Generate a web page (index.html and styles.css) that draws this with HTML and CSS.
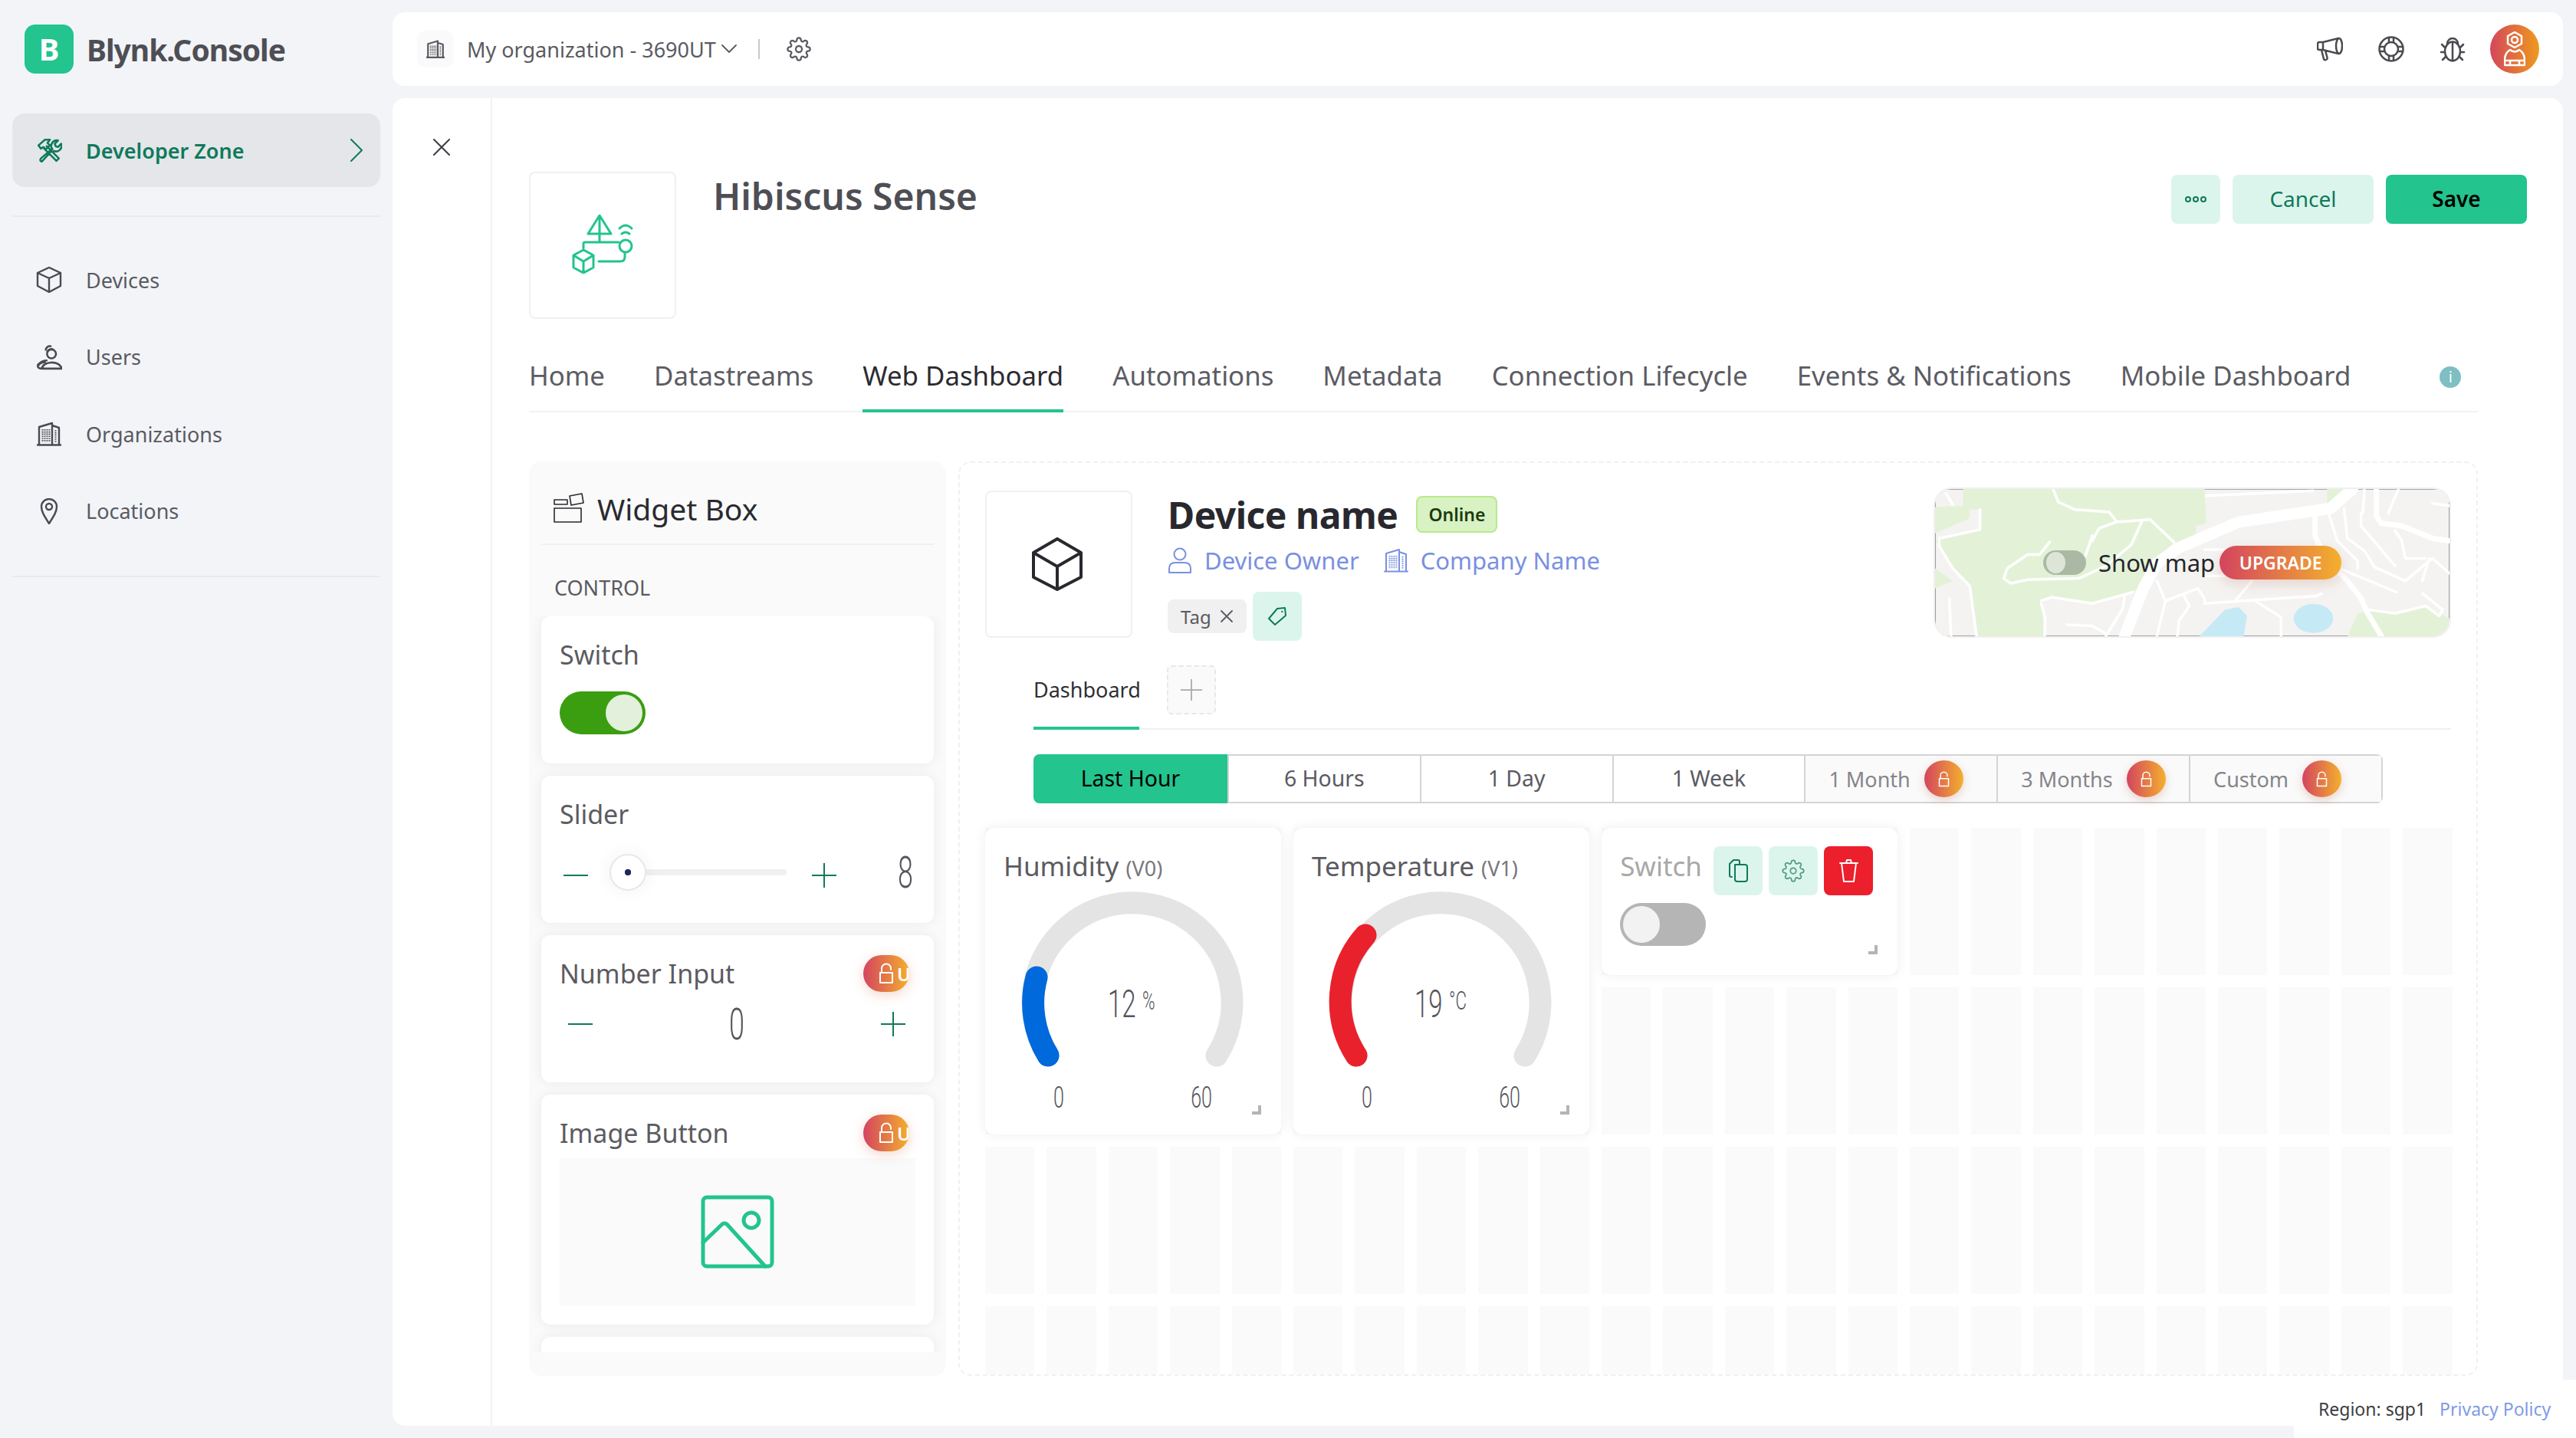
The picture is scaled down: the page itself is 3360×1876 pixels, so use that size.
FILE: index.html
```html
<!DOCTYPE html>
<html>
<head>
    <title>Blynk.Console</title>
    <link rel="stylesheet" href="styles.css">
</head>
<body>
    <svg class="sprite">
        <symbol id="gear" viewBox="0 0 24 24"><circle cx="12" cy="12" r="3"/><path d="M19.4 15a1.65 1.65 0 0 0 .33 1.82l.06.06a2 2 0 0 1 0 2.83 2 2 0 0 1-2.83 0l-.06-.06a1.65 1.65 0 0 0-1.82-.33 1.65 1.65 0 0 0-1 1.51V21a2 2 0 0 1-2 2 2 2 0 0 1-2-2v-.09A1.65 1.65 0 0 0 9 19.4a1.65 1.65 0 0 0-1.82.33l-.06.06a2 2 0 0 1-2.83 0 2 2 0 0 1 0-2.83l.06-.06a1.65 1.65 0 0 0 .33-1.82 1.65 1.65 0 0 0-1.51-1H3a2 2 0 0 1-2-2 2 2 0 0 1 2-2h.09A1.65 1.65 0 0 0 4.6 9a1.65 1.65 0 0 0-.33-1.82l-.06-.06a2 2 0 0 1 0-2.83 2 2 0 0 1 2.83 0l.06.06a1.65 1.65 0 0 0 1.82.33H9a1.65 1.65 0 0 0 1-1.51V3a2 2 0 0 1 2-2 2 2 0 0 1 2 2v.09a1.65 1.65 0 0 0 1 1.51 1.65 1.65 0 0 0 1.82-.33l.06-.06a2 2 0 0 1 2.83 0 2 2 0 0 1 0 2.83l-.06.06a1.65 1.65 0 0 0-.33 1.82V9a1.65 1.65 0 0 0 1.51 1H21a2 2 0 0 1 2 2 2 2 0 0 1-2 2h-.09a1.65 1.65 0 0 0-1.51 1z"/></symbol>
        <symbol id="building" viewBox="0 0 32 34"><path d="M3 31V8L20 3V31M20 6L29 9V31M1 31.5H31"/><path class="dots" d="M7.5 11V28M10.5 11V28M13.5 11V28M16.5 11V28M24.5 12V28"/></symbol>
        <symbol id="lock" viewBox="0 0 20 28"><path d="M2 13H18V26H2ZM4 13V7.5A6 6 0 0 1 16 7.5V9"/></symbol>
        <symbol id="plus" viewBox="0 0 32 32"><path d="M0 16H32M16 0V32"/></symbol>
        <symbol id="minus" viewBox="0 0 32 32"><path d="M0 16H32"/></symbol>
    </svg>

    <aside class="sidebar">
        <div class="brand">
            <div class="brand-logo">B</div>
            <div class="brand-name">Blynk.Console</div>
        </div>
        <div class="nav-active">
            <svg class="nav-icon tools" viewBox="0 0 32 30"><path d="M13 10L28 25L25 28L10 13M3 9L11 2H17L14 6L17 9L12 14L9 11L6 13ZM20 13L6 25Q4 28 7 29L18 17M20 14A7 7 0 0 1 27 3L23 7L24 10L27 11L31 7A7 7 0 0 1 22 16"/></svg>
            <span class="nav-active-label">Developer Zone</span>
            <svg class="nav-chevron" viewBox="0 0 16 30"><path d="M1 1L15 15L1 29"/></svg>
        </div>
        <div class="nav-list">
            <div class="nav-item">
                <svg class="nav-icon" viewBox="0 0 32 34"><path d="M16 1L31 8V25L16 33L1 25V8ZM1 8L16 15L31 8M16 15V33"/></svg>
                <span>Devices</span>
            </div>
            <div class="nav-item">
                <svg class="nav-icon" viewBox="0 0 32 32"><circle cx="19" cy="12" r="5.5"/><path d="M14 9A5 5 0 0 1 21 6.5M12 7A5 5 0 0 1 18 2.5M7 30C9 21 27 19 32 30ZM7 30C2 30 0 26 5 23C7 21 10 20 13 20M3 26C5 23 8 22 11 22"/></svg>
                <span>Users</span>
            </div>
            <div class="nav-item">
                <svg class="nav-icon"><use href="#building"/></svg>
                <span>Organizations</span>
            </div>
            <div class="nav-item">
                <svg class="nav-icon" viewBox="0 0 32 34"><path d="M16 33C9 22 6 17 6 11A10 10 0 0 1 26 11C26 17 23 22 16 33Z"/><circle cx="16" cy="11" r="4"/></svg>
                <span>Locations</span>
            </div>
        </div>
    </aside>

    <div class="page">
        <header class="topbar">
            <div class="org-badge"><svg class="org-icon"><use href="#building"/></svg></div>
            <span class="org-name">My organization - 3690UT</span>
            <svg class="org-chevron" viewBox="0 0 20 12"><path d="M1 1L10 10L19 1"/></svg>
            <span class="org-sep"></span>
            <svg class="org-gear"><use href="#gear"/></svg>
            <div class="topbar-icons">
                <svg class="top-icon" viewBox="0 0 34 30"><path d="M28 1L8 6H3Q1 6 1 8V14Q1 16 3 16H8L28 21M8 6V16M6 16L9 28Q10 30 12 29Q14 28 13.5 26L11 17"/><ellipse cx="29" cy="11" rx="4" ry="10"/></svg>
                <svg class="top-icon" viewBox="0 0 34 34"><circle cx="17" cy="17" r="15.5"/><circle cx="17" cy="17" r="9"/><path d="M14 2V8M20 2V8M14 26V32M20 26V32M2 14H8M2 20H8M26 14H32M26 20H32"/></svg>
                <svg class="top-icon" viewBox="0 0 30 34"><ellipse cx="15" cy="20" rx="10" ry="12.5"/><path d="M15 8V32M8 10A7 7 0 0 1 22 10M5 15L1 11M25 15L29 11M4 21H0M26 21H30M6 27L2 31M24 27L28 31"/></svg>
                <div class="avatar">
                    <svg class="avatar-icon" viewBox="0 0 28 46"><path d="M14 1L23 6V16L14 21L5 16V6Z"/><circle cx="14" cy="11" r="4"/><path d="M8 24Q14 29 20 24Q27 28 27 38V44H1V38Q1 28 8 24ZM1 38H27M8 38V44M20 38V44"/></svg>
                </div>
            </div>
        </header>

        <main class="panel">
            <div class="close-col">
                <svg class="close-icon" viewBox="0 0 22 22"><path d="M1 1L21 21M21 1L1 21"/></svg>
            </div>
            <div class="content">
                <div class="product-head">
                    <div class="product-box">
                        <svg class="product-icon" viewBox="0 0 81 77"><path d="M36 1L51 25H21ZM36 1V25M36 25V36M15 44V38Q15 36 17 36H61"/><circle cx="70" cy="41" r="8"/><path d="M62 18Q70 10 78 18M65 25Q70 21 75 25"/><path d="M15 46L28 53V69L15 76L2 69V53ZM2 53L15 61L28 53M15 61V76M35 61H63Q69 61 69 55V50"/></svg>
                    </div>
                    <h1 class="product-title">Hibiscus Sense</h1>
                    <div class="product-actions">
                        <button class="btn btn-soft btn-more">
                            <svg class="more-icon" viewBox="0 0 28 8"><circle cx="4" cy="4" r="3"/><circle cx="14" cy="4" r="3"/><circle cx="24" cy="4" r="3"/></svg>
                        </button>
                        <button class="btn btn-soft btn-wide">Cancel</button>
                        <button class="btn btn-save btn-wide">Save</button>
                    </div>
                </div>

                <nav class="tabs">
                    <span class="tab">Home</span>
                    <span class="tab">Datastreams</span>
                    <span class="tab tab-active">Web Dashboard</span>
                    <span class="tab">Automations</span>
                    <span class="tab">Metadata</span>
                    <span class="tab">Connection Lifecycle</span>
                    <span class="tab">Events &amp; Notifications</span>
                    <span class="tab">Mobile Dashboard</span>
                    <span class="tab-info">i</span>
                </nav>

                <div class="workspace">
                    <section class="widget-box">
                        <div class="box-head">
                            <svg class="box-icon" viewBox="0 0 40 40"><path d="M1 20H36V38H1ZM1 9H18V15H1ZM21 4L37 1L39 13L23 16Z"/></svg>
                            <span>Widget Box</span>
                        </div>
                        <div class="box-group">CONTROL</div>
                        <div class="box-list">
                            <div class="box-card">
                                <div class="card-title">Switch</div>
                                <div class="toggle toggle-on"><span class="knob"></span></div>
                            </div>
                            <div class="box-card">
                                <div class="card-title">Slider</div>
                                <div class="slider-row">
                                    <svg class="step"><use href="#minus"/></svg>
                                    <div class="slider-track"><span class="slider-thumb"></span></div>
                                    <svg class="step"><use href="#plus"/></svg>
                                    <span class="thin slider-value">8</span>
                                </div>
                            </div>
                            <div class="box-card">
                                <div class="card-title">Number Input</div>
                                <div class="upgrade-pill"><svg class="pill-lock"><use href="#lock"/></svg><span>U</span></div>
                                <div class="number-row">
                                    <svg class="step"><use href="#minus"/></svg>
                                    <span class="thin number-value">0</span>
                                    <svg class="step"><use href="#plus"/></svg>
                                </div>
                            </div>
                            <div class="box-card box-card-tall">
                                <div class="card-title">Image Button</div>
                                <div class="upgrade-pill"><svg class="pill-lock"><use href="#lock"/></svg><span>U</span></div>
                                <div class="image-slot">
                                    <svg class="image-icon" viewBox="0 0 96 96"><rect x="3" y="3" width="90" height="90" rx="5"/><ellipse cx="66" cy="33" rx="10" ry="10"/><path d="M3 62L28 38Q31 36 34 38L84 93"/></svg>
                                </div>
                            </div>
                            <div class="box-card"></div>
                        </div>
                    </section>

                    <section class="device-panel">
                        <div class="device-head">
                            <div class="device-box">
                                <svg class="device-icon" viewBox="0 0 66 70"><path d="M33 2L64 20V52L33 68L2 52V20ZM2 20L33 38L64 20M33 38V68"/></svg>
                            </div>
                            <div class="device-info">
                                <div class="device-title">
                                    <span class="device-name">Device name</span>
                                    <span class="status">Online</span>
                                </div>
                                <div class="device-links">
                                    <svg class="link-icon" viewBox="0 0 32 34"><circle cx="16" cy="9" r="7.5"/><path d="M2 33V28Q2 20 10 20H22Q30 20 30 28V33Z"/></svg>
                                    <span>Device Owner</span>
                                    <svg class="link-icon link-building"><use href="#building"/></svg>
                                    <span>Company Name</span>
                                </div>
                                <div class="device-tags">
                                    <span class="tag">Tag <svg class="tag-x" viewBox="0 0 16 16"><path d="M1 1L15 15M15 1L1 15"/></svg></span>
                                    <span class="tag-add"><svg class="tag-icon" viewBox="0 0 26 26"><path d="M13 3L23 2L24 12L10 24L2 16ZM19 7H19.5"/></svg></span>
                                </div>
                            </div>
                            <div class="map-card">
                                <svg class="map-art" viewBox="28 33 1512 588" preserveAspectRatio="none">
                                    <rect x="28" y="33" width="1512" height="588" fill="#f4f3f1"/>
                                    <path class="map-green" d="M110 33H820L825 170L795 180V225L720 270L640 400L610 450L490 490L370 465L340 490L350 621H150L130 420L80 350L30 240L40 230L160 195V115H130V150L28 210V105L110 100ZM1240 621L1270 530L1310 515L1390 530L1470 500L1540 550V621ZM1180 33H1240L1190 100H1180ZM28 350L80 400L28 430Z"/>
                                    <path class="map-water" d="M805 621L880 515L920 505L945 540L935 621Z"/>
                                    <circle class="map-water" cx="1140" cy="550" r="58"/>
                                    <g class="map-roads">
                                        <path class="road-wide" d="M585 621L640 430L680 330L740 270L920 165L1190 110L1255 33"/>
                                        <path class="road-mid" d="M1145 130V220L1170 300L1240 400L1280 470L1300 530L1340 621M1325 33V140L1340 170L1400 180L1490 230L1540 240"/>
                                        <path d="M375 33L390 85L440 115L540 125L560 160M490 240L510 190L560 165L660 155L730 245M635 165L605 255L530 340L450 390L300 395L250 410L230 390L240 350L300 295L335 295L365 245M490 220L470 300M160 115V195L40 230V260L80 350L130 420L150 621M70 470L75 621M340 480L370 465L490 490L610 445M340 490L352 550L350 621M585 460L580 510L530 621M415 575L490 580L530 610M680 400L705 480L680 621M705 480L800 430L820 470V490L1150 460L1165 450M760 460L775 500L745 560L740 621M960 400L910 480M970 480L1045 545V621M825 60L1140 40M1185 130L1210 240L1270 320V350M1230 110L1240 230L1290 280L1320 345L1410 400L1490 310L1540 370M1280 130V180L1380 340M1225 355L1385 445M1290 33L1285 130M1390 33L1360 130M1380 200L1400 240L1410 310L1470 310M1460 400L1480 310M1300 515L1380 530L1470 500L1510 540L1520 515L1460 450M820 275H880M820 380H880M1490 90L1540 100M60 50L80 95"/>
                                    </g>
                                </svg>
                                <div class="map-overlay">
                                    <span class="map-toggle"><span class="map-knob"></span></span>
                                    <span class="map-label">Show map</span>
                                    <span class="map-upgrade">UPGRADE</span>
                                </div>
                            </div>
                        </div>

                        <div class="dash-tabs">
                            <span class="dash-tab">Dashboard</span>
                            <span class="dash-add"><svg class="dash-plus"><use href="#plus"/></svg></span>
                        </div>

                        <div class="ranges">
                            <span class="range range-active">Last Hour</span>
                            <span class="range">6 Hours</span>
                            <span class="range">1 Day</span>
                            <span class="range">1 Week</span>
                            <span class="range range-locked">1 Month <span class="lock-dot"><svg class="dot-lock"><use href="#lock"/></svg></span></span>
                            <span class="range range-locked">3 Months <span class="lock-dot"><svg class="dot-lock"><use href="#lock"/></svg></span></span>
                            <span class="range range-locked">Custom <span class="lock-dot"><svg class="dot-lock"><use href="#lock"/></svg></span></span>
                        </div>

                        <div class="grid">
                            <div class="widget widget-gauge">
                                <div class="widget-title">Humidity <small>(V0)</small></div>
                                <svg class="gauge" viewBox="0 0 386 400">
                                    <path class="gauge-track" d="M82 297A130 130 0 1 1 302 297"/>
                                    <path class="gauge-blue" d="M82 297A130 130 0 0 1 67 195"/>
                                    <text class="gauge-value" transform="translate(160 247) scale(.66 1)">12</text>
                                    <text class="gauge-unit" transform="translate(205 237) scale(.66 1)">%</text>
                                    <text class="gauge-limit" transform="translate(96 365) scale(.66 1)" text-anchor="middle">0</text>
                                    <text class="gauge-limit" transform="translate(282 365) scale(.66 1)" text-anchor="middle">60</text>
                                </svg>
                                <span class="corner"></span>
                            </div>
                            <div class="widget widget-gauge">
                                <div class="widget-title">Temperature <small>(V1)</small></div>
                                <svg class="gauge" viewBox="0 0 386 400">
                                    <path class="gauge-track" d="M82 297A130 130 0 1 1 302 297"/>
                                    <path class="gauge-red" d="M82 297A130 130 0 0 1 94 140"/>
                                    <text class="gauge-value" transform="translate(158 247) scale(.66 1)">19</text>
                                    <text class="gauge-unit" transform="translate(203 237) scale(.66 1)">°C</text>
                                    <text class="gauge-limit" transform="translate(96 365) scale(.66 1)" text-anchor="middle">0</text>
                                    <text class="gauge-limit" transform="translate(282 365) scale(.66 1)" text-anchor="middle">60</text>
                                </svg>
                                <span class="corner"></span>
                            </div>
                            <div class="widget widget-switch">
                                <div class="switch-head">
                                    <span class="widget-title widget-title-dim">Switch</span>
                                    <span class="tool"><svg class="tool-icon" viewBox="0 0 25 30"><path d="M8 7H21Q24 7 24 10V26Q24 29 21 29H11Q8 29 8 26ZM4 23H3Q1 23 1 21V6L6 1H12Q14 1 14 3V7"/></svg></span>
                                    <span class="tool"><svg class="tool-icon tool-gear"><use href="#gear"/></svg></span>
                                    <span class="tool tool-danger"><svg class="tool-icon" viewBox="0 0 25 30"><path d="M1 5H24M3 5L6 29H19L22 5M9 5L10 1H15L16 5"/></svg></span>
                                </div>
                                <div class="toggle toggle-off"><span class="knob"></span></div>
                                <span class="corner"></span>
                            </div>
                        </div>
                    </section>
                </div>
            </div>
        </main>
    </div>

    <footer class="legal">
        <span>Region: sgp1</span>
        <span class="legal-link">Privacy Policy</span>
    </footer>
</body>
</html>
```

FILE: styles.css
```css
* {
  box-sizing: border-box;
}
html, body {
  height: 100%;
}
body {
  margin: 0;
  display: flex;
  height: 1876px;
  overflow: hidden;
  position: relative;
  background: #f2f4f8;
  color: #5a5a62;
  font-family: "Noto Sans", sans-serif;
  font-size: 27px;
}
svg {
  display: block;
  flex: none;
  fill: none;
  stroke: currentColor;
  stroke-width: 2.5;
  stroke-linejoin: round;
  stroke-linecap: round;
}
.sprite {
  display: none;
}
.dots {
  stroke-dasharray: 1.6 1.2;
  stroke-linecap: butt;
  stroke-width: 2;
}

/* sidebar */
.sidebar {
  width: 512px;
  flex: none;
  padding: 32px 16px 0;
}
.brand {
  display: flex;
  align-items: center;
  padding-left: 16px;
  height: 64px;
}
.brand-logo {
  width: 64px;
  height: 64px;
  border-radius: 14px;
  background: #23c48e;
  color: #fff;
  font-size: 40px;
  font-weight: 700;
  line-height: 64px;
  text-align: center;
}
.brand-name {
  margin-left: 17px;
  color: #4e4e55;
  font-size: 39px;
  font-weight: 700;
  letter-spacing: -1px;
}
.nav-active {
  display: flex;
  align-items: center;
  height: 96px;
  margin-top: 52px;
  padding: 0 23px 0 31px;
  border-radius: 16px;
  background: #e4e6ea;
  color: #0f7a5a;
  font-weight: 600;
}
.nav-active-label {
  margin-left: 31px;
  flex: 1;
}
.nav-icon {
  width: 34px;
  height: 34px;
  stroke-width: 2.4;
  color: #4a4a50;
}
.nav-icon.tools {
  color: #0f7a5a;
}
.nav-chevron {
  width: 16px;
  height: 30px;
  stroke-width: 2;
}
.nav-list {
  margin-top: 37px;
  padding: 32px 0 34px;
  border-top: 2px solid #e8eaee;
  border-bottom: 2px solid #e8eaee;
}
.nav-item {
  display: flex;
  align-items: center;
  gap: 31px;
  height: 100.5px;
  padding-left: 31px;
}

/* top bar */
.page {
  flex: 1;
  display: flex;
  flex-direction: column;
  gap: 16px;
  padding: 16px 17px 16px 0;
  min-width: 0;
}
.topbar {
  display: flex;
  align-items: center;
  height: 96px;
  padding: 0 31px 0 32px;
  border-radius: 16px;
  background: #fff;
}
.org-badge {
  display: flex;
  align-items: center;
  justify-content: center;
  width: 48px;
  height: 48px;
  border-radius: 12px;
  background: #fafafa;
}
.org-icon {
  width: 24px;
  height: 26px;
  stroke-width: 3;
}
.org-name {
  margin-left: 17px;
}
.org-chevron {
  width: 20px;
  height: 12px;
  margin-left: 7px;
  stroke-width: 1.8;
}
.org-sep {
  width: 2px;
  height: 26px;
  margin: 0 35px 0 28px;
  background: #c9c9cd;
}
.org-gear {
  width: 32px;
  height: 32px;
  stroke-width: 1.7;
}
.topbar-icons {
  display: flex;
  align-items: center;
  gap: 46px;
  margin-left: auto;
  color: #4a4a50;
}
.top-icon {
  width: 34px;
  height: 34px;
}
.avatar {
  display: flex;
  align-items: center;
  justify-content: center;
  width: 64px;
  height: 64px;
  margin-left: -14px;
  border-radius: 50%;
  background: linear-gradient(90deg, #d4465c, #ee9a1c);
  color: #fff;
}
.avatar-icon {
  width: 28px;
  height: 46px;
}

/* main panel */
.panel {
  flex: 1;
  display: flex;
  min-height: 0;
  border-radius: 16px;
  background: #fff;
}
.close-col {
  width: 130px;
  flex: none;
  padding: 53px 0 0 53px;
  border-right: 2px solid #f2f2f2;
}
.close-icon {
  width: 22px;
  height: 22px;
  stroke-width: 2;
  color: #3c3c42;
}
.content {
  flex: 1;
  min-width: 0;
  padding: 96px 47px 0 48px;
}
.product-head {
  display: flex;
  height: 192px;
}
.product-box {
  display: flex;
  align-items: center;
  justify-content: center;
  width: 192px;
  height: 192px;
  border: 2px solid #f0f0f0;
  border-radius: 8px;
}
.product-icon {
  width: 81px;
  height: 77px;
  margin: -4px 0 0 0;
  stroke-width: 3;
  color: #23c48e;
}
.product-title {
  margin: 0 0 0 48px;
  color: #4e4e55;
  font-size: 48px;
  font-weight: 600;
  line-height: 64px;
}
.product-actions {
  display: flex;
  gap: 16px;
  margin: 4px 0 0 auto;
}
.btn {
  display: flex;
  align-items: center;
  justify-content: center;
  height: 64px;
  padding-bottom: 4px;
  border: none;
  border-radius: 8px;
  font-family: inherit;
  font-size: 28px;
}
.btn-soft {
  background: #dcf5ec;
  color: #0f7a5a;
}
.btn-save {
  background: #23c48e;
  color: #000;
  font-weight: 600;
}
.btn-more {
  width: 64px;
  padding: 0;
}
.btn-wide {
  width: 184px;
}
.more-icon {
  width: 28px;
  height: 8px;
  stroke-width: 2;
}

/* tabs */
.tabs {
  display: flex;
  align-items: center;
  gap: 64px;
  height: 106px;
  margin: 16px 64px 0 0;
  border-bottom: 2px solid #f2f2f2;
  color: #5c5c64;
  font-size: 34.8px;
}
.tab {
  display: flex;
  align-items: center;
  height: 106px;
  border-bottom: 4px solid transparent;
  margin-bottom: -2px;
  padding-top: 12px;
}
.tab-active {
  border-bottom-color: #23c48e;
  color: #2b2b30;
}
.tab-info {
  width: 28px;
  height: 28px;
  margin-left: 52px;
  margin-top: 16px;
  border-radius: 50%;
  background: #7dbfc3;
  color: #fff;
  font-size: 20px;
  line-height: 28px;
  text-align: center;
}

/* widget box */
.workspace {
  display: flex;
  gap: 16px;
  height: 1193px;
  margin: 64px 64px 0 0;
}
.widget-box {
  width: 544px;
  flex: none;
  display: flex;
  flex-direction: column;
  padding: 0 16px 31px;
  border-radius: 16px;
  background: #fafafa;
}
.box-head {
  display: flex;
  align-items: center;
  gap: 17px;
  height: 109px;
  padding: 15px 0 0 16px;
  border-bottom: 2px solid #f0f0f0;
  color: #2a2a30;
  font-size: 39px;
}
.box-icon {
  width: 40px;
  height: 40px;
  stroke-width: 1.6;
}
.box-group {
  margin: 37px 0 18px 17px;
  line-height: 38px;
  font-size: 27px;
}
.box-list {
  flex: 1;
  display: flex;
  flex-direction: column;
  gap: 16px;
  min-height: 0;
  margin: 0 -16px;
  padding: 0 16px;
  overflow: hidden;
}
.box-card {
  position: relative;
  flex: none;
  height: 192px;
  padding: 28px 24px 0;
  border-radius: 12px;
  background: #fff;
  box-shadow: 0 0 16px rgba(0, 0, 0, .07);
}
.box-card-tall {
  height: 300px;
}
.card-title {
  color: #5b5b61;
  font-size: 34px;
  line-height: 44px;
}
.toggle {
  position: relative;
  width: 112px;
  height: 56px;
  border-radius: 28px;
}
.toggle-on {
  margin-top: 26px;
  background: #3a9e10;
}
.toggle-on .knob {
  left: 60px;
  background: #e3f0dc;
}
.toggle-off {
  background: #b5b5b5;
}
.toggle-off .knob {
  left: 4px;
  background: #f2f2f2;
}
.knob {
  position: absolute;
  top: 4px;
  width: 48px;
  height: 48px;
  border-radius: 50%;
}
.step {
  width: 32px;
  height: 32px;
  stroke-width: 2;
  color: #0f7a5a;
}
.slider-row {
  display: flex;
  align-items: center;
  margin-top: 32px;
  padding-left: 5px;
  height: 52px;
}
.slider-track {
  position: relative;
  flex: none;
  width: 231px;
  height: 8px;
  margin: -8px 33px 0 0;
  border-radius: 4px;
  background: #f0f0f0;
}
.slider-thumb {
  position: absolute;
  top: -20px;
  left: 0;
  width: 48px;
  height: 48px;
  border: 2px solid #e8e8e8;
  border-radius: 50%;
  background: #fff radial-gradient(circle, #1f2a5c 0 4px, transparent 4.5px);
  box-shadow: 0 0 24px rgba(0, 0, 0, .06);
}
.slider-row .step:first-child {
  margin-right: 28px;
}
.thin {
  display: inline-block;
  color: #55555c;
  font-family: Roboto, sans-serif;
  font-size: 58px;
  font-weight: 300;
  line-height: 52px;
  transform: scaleX(.62);
}
.slider-value {
  margin: -8px 0 0 74px;
}
.number-row {
  display: flex;
  align-items: center;
  justify-content: space-between;
  height: 52px;
  margin-top: 18px;
  padding: 0 13px 0 11px;
}
.upgrade-pill {
  position: absolute;
  top: 26px;
  left: 420px;
  display: flex;
  align-items: center;
  gap: 4px;
  width: 60px;
  height: 48px;
  padding-left: 20px;
  overflow: hidden;
  border-radius: 24px;
  background: linear-gradient(90deg, #d4445f, #f3b02e);
  box-shadow: 0 4px 16px rgba(212, 100, 60, .25);
  color: #fff;
  font-size: 24px;
  font-weight: 600;
}
.pill-lock {
  width: 20px;
  height: 28px;
  stroke-width: 2;
}
.image-slot {
  display: flex;
  align-items: center;
  justify-content: center;
  height: 192px;
  margin-top: 11px;
  background: #fafafa;
}
.image-icon {
  width: 96px;
  height: 96px;
  stroke-width: 5;
  color: #23c48e;
}

/* device panel */
.device-panel {
  flex: 1;
  min-width: 0;
  padding: 34px 33px 0;
  border: 2px dashed #f0f0f0;
  border-radius: 16px;
  overflow: hidden;
}
.device-head {
  display: flex;
  height: 196px;
}
.device-box {
  display: flex;
  align-items: center;
  justify-content: center;
  width: 192px;
  height: 192px;
  margin-top: 2px;
  border: 2px solid #f0f0f0;
  border-radius: 8px;
}
.device-icon {
  width: 66px;
  height: 70px;
  margin-left: -4px;
  stroke-width: 4;
  color: #28282e;
}
.device-info {
  margin-left: 46px;
}
.device-title {
  display: flex;
  align-items: center;
  gap: 24px;
  height: 60px;
  margin-top: 3px;
}
.device-name {
  color: #28282e;
  font-size: 48px;
  font-weight: 700;
  letter-spacing: -.5px;
}
.status {
  width: 106px;
  height: 48px;
  border: 2px solid #b9e98e;
  border-radius: 8px;
  background: #d8f2c4;
  color: #1d3a10;
  font-size: 23px;
  font-weight: 600;
  line-height: 44px;
  text-align: center;
}
.device-links {
  display: flex;
  align-items: center;
  gap: 16px;
  height: 44px;
  margin-top: 8px;
  color: #7a90e0;
  font-size: 31px;
}
.link-icon {
  width: 32px;
  height: 34px;
  stroke-width: 2;
}
.link-building {
  margin-left: 16px;
}
.device-tags {
  display: flex;
  align-items: center;
  gap: 8px;
  margin-top: 19px;
}
.tag {
  display: flex;
  align-items: center;
  gap: 12px;
  height: 44px;
  padding: 0 18px 0 17px;
  border-radius: 8px;
  background: #f0f0f0;
  font-size: 24px;
}
.tag-x {
  width: 16px;
  height: 16px;
  stroke-width: 1.8;
}
.tag-add {
  display: flex;
  align-items: center;
  justify-content: center;
  width: 64px;
  height: 64px;
  border-radius: 8px;
  background: #dcf5ec;
  color: #0f7a5a;
}
.tag-icon {
  width: 26px;
  height: 26px;
  stroke-width: 2;
}
.map-card {
  position: relative;
  width: 675px;
  height: 196px;
  margin: -2px 0 0 auto;
  border: 2px solid #f0f0f0;
  border-radius: 24px;
  overflow: hidden;
}
.map-art {
  width: 100%;
  height: 100%;
  filter: blur(.7px);
}
.map-green {
  fill: #e3f2d7;
  stroke: none;
}
.map-water {
  fill: #c6e9f6;
  stroke: none;
}
.map-roads path {
  stroke: #fff;
  stroke-width: 3.5;
  vector-effect: non-scaling-stroke;
}
.map-roads .road-wide {
  stroke-width: 15;
}
.map-roads .road-mid {
  stroke-width: 7;
}
.map-overlay {
  position: absolute;
  top: 74px;
  left: 141px;
  display: flex;
  align-items: center;
  height: 44px;
}
.map-toggle {
  position: relative;
  width: 56px;
  height: 32px;
  border-radius: 16px;
  background: #abb9a4;
}
.map-knob {
  position: absolute;
  top: 2px;
  left: 4px;
  width: 25px;
  height: 28px;
  border-radius: 50%;
  background: #dde5d8;
}
.map-label {
  margin-left: 16px;
  color: #26262c;
  font-size: 31px;
}
.map-upgrade {
  width: 159px;
  height: 44px;
  margin-left: 6px;
  border-radius: 22px;
  background: linear-gradient(90deg, #d4445f, #f3b02e);
  box-shadow: 0 6px 16px rgba(180, 90, 70, .2);
  color: #fff;
  font-size: 23px;
  font-weight: 600;
  line-height: 44px;
  text-align: center;
}

/* dashboard */
.dash-tabs {
  display: flex;
  align-items: flex-start;
  height: 84px;
  margin: 34px 0 0 63px;
  padding-top: 0;
  border-bottom: 2px solid #f0f0f0;
}
.dash-tab {
  width: 138px;
  height: 84px;
  border-bottom: 4px solid #23c48e;
  color: #2f2f35;
  line-height: 64px;
  white-space: nowrap;
  font-size: 27px;
}
.dash-add {
  display: flex;
  align-items: center;
  justify-content: center;
  width: 64px;
  height: 64px;
  margin-left: 36px;
  border: 2px dashed #e8e8e8;
  border-radius: 6px;
  background: #fafafa;
  color: #a8a8a8;
}
.dash-plus {
  width: 28px;
  height: 28px;
  stroke-width: 2;
}
.ranges {
  display: flex;
  width: 1760px;
  height: 64px;
  margin: 32px 0 0 63px;
  border: 2px solid #d4d4d4;
  border-radius: 8px;
  font-size: 28.4px;
}
.range {
  flex: none;
  width: calc(100% / 7);
  display: flex;
  align-items: center;
  justify-content: center;
  gap: 18px;
  padding-bottom: 2px;
  border-left: 2px solid #d4d4d4;
  color: #5a5a62;
}
.range-active {
  width: calc(100% / 7 + 2px);
  margin: -2px 0 -2px -2px;
  border: none;
  border-radius: 8px 0 0 8px;
  background: #23c48e;
  color: #000;
}
.range-locked {
  justify-content: flex-start;
  padding: 0 0 0 30px;
  background: #fafafa;
  color: #85858b;
  font-size: 27px;
}
.lock-dot {
  display: flex;
  align-items: center;
  justify-content: center;
  width: 51px;
  height: 48px;
  border-radius: 50%;
  background: linear-gradient(90deg, #d4445f, #f3b02e);
  box-shadow: 0 4px 12px rgba(180, 90, 70, .25);
  color: #fff;
}
.dot-lock {
  width: 15px;
  height: 21px;
  stroke-width: 2;
}

/* widget grid */
.grid {
  position: relative;
  display: grid;
  grid-template-columns: repeat(24, 1fr);
  grid-auto-rows: 192px;
  gap: 16px;
  width: 1914px;
  margin-top: 32px;
}
.grid::before {
  content: "";
  position: absolute;
  top: 0;
  left: 0;
  right: 0;
  height: 860px;
  background: repeating-linear-gradient(90deg, #fafafa 0 64.4px, transparent 64.4px 80.4px);
  -webkit-mask-image: repeating-linear-gradient(180deg, #000 0 192px, transparent 192px 208px);
  mask-image: repeating-linear-gradient(180deg, #000 0 192px, transparent 192px 208px);
}
.widget {
  position: relative;
  grid-column: span 5;
  padding: 24px;
  border-radius: 12px;
  background: #fff;
  box-shadow: 0 0 16px rgba(0, 0, 0, .07);
}
.widget-gauge {
  grid-row: span 2;
}
.widget-title {
  position: relative;
  top: 2px;
  color: #5b5b61;
  font-size: 35px;
  line-height: 48px;
}
.widget-title small {
  color: #77777d;
  font-size: 27px;
}
.widget-title-dim {
  color: #a8a8a8;
}
.gauge {
  position: absolute;
  top: 0;
  left: 0;
  width: 100%;
  height: 100%;
}
.gauge-track, .gauge-blue, .gauge-red {
  stroke-width: 29;
}
.gauge-track {
  stroke: #e4e4e4;
}
.gauge-blue {
  stroke: #0069dc;
}
.gauge-red {
  stroke: #e9212c;
}
.gauge text {
  fill: #55555c;
  stroke: none;
  font-family: Roboto, sans-serif;
  font-weight: 300;
}
.gauge-value {
  font-size: 50px;
}
.gauge-unit {
  font-size: 34px;
}
.gauge-limit {
  font-size: 38px;
}
.corner {
  position: absolute;
  right: 26px;
  bottom: 26px;
  width: 12px;
  height: 12px;
  border-right: 4px solid #b4b4b4;
  border-bottom: 4px solid #b4b4b4;
}
.widget-switch .corner {
  bottom: 27px;
}
.switch-head {
  display: flex;
  align-items: flex-start;
  gap: 8px;
  height: 74px;
}
.switch-head .widget-title {
  width: 114px;
}
.tool {
  display: flex;
  align-items: center;
  justify-content: center;
  width: 64px;
  height: 64px;
  border-radius: 8px;
  background: #dcf5ec;
  color: #0f7a5a;
}
.tool-danger {
  background: #ec1f2d;
  color: #fff;
}
.tool-icon {
  width: 25px;
  height: 30px;
  stroke-width: 2;
}
.tool-gear {
  width: 30px;
  height: 30px;
  stroke-width: 1.4;
  color: #4f9c80;
}

/* footer */
.legal {
  position: absolute;
  right: 0;
  bottom: 0;
  display: flex;
  gap: 18px;
  align-items: center;
  width: 368px;
  height: 76px;
  padding: 0 0 0 32px;
  background: #fff;
  color: #3c3c42;
  font-size: 23px;
}
.legal-link {
  color: #7f9be6;
}
```
